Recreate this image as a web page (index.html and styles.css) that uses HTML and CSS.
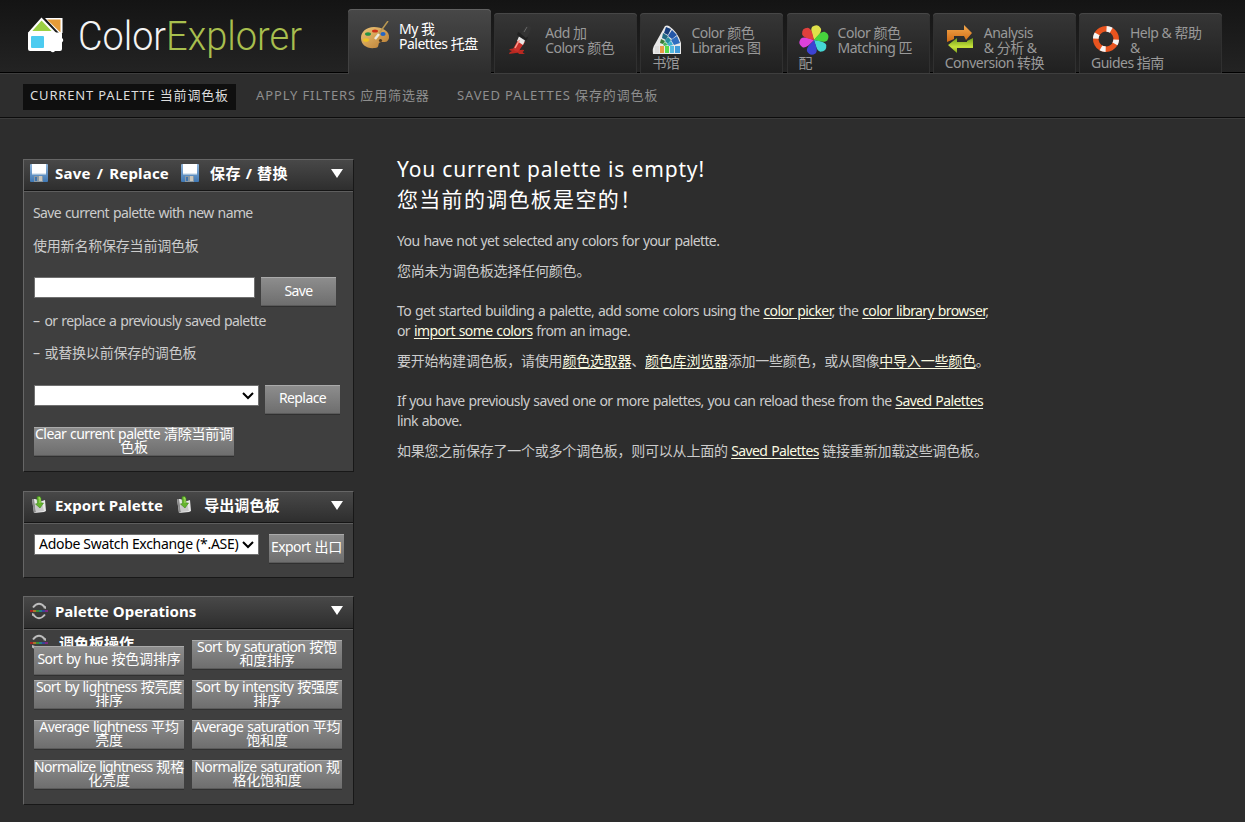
FILE: index.html
```html
<!DOCTYPE html>
<html lang="zh-CN">
<head>
<meta charset="utf-8">
<title>ColorExplorer</title>
<link rel="stylesheet" href="styles.css">
</head>
<body>
<svg width="0" height="0" class="defs">
  <defs>
    <linearGradient id="disk" x1="0" y1="0" x2="0" y2="1"><stop offset="0" stop-color="#8fb4d9"/><stop offset="1" stop-color="#3f78b4"/></linearGradient>
    <linearGradient id="wood" x1="0" y1="0" x2="1" y2="1"><stop offset="0" stop-color="#eec678"/><stop offset="1" stop-color="#b87a30"/></linearGradient>
    <linearGradient id="orange" x1="0" y1="0" x2="0" y2="1"><stop offset="0" stop-color="#f5a94d"/><stop offset="1" stop-color="#d06a14"/></linearGradient>
    <linearGradient id="lime" x1="0" y1="0" x2="0" y2="1"><stop offset="0" stop-color="#6f9c1c"/><stop offset=".6" stop-color="#c8e43c"/><stop offset="1" stop-color="#7ea21c"/></linearGradient>
    <symbol id="i-disk" viewBox="0 0 18 18"><rect width="18" height="18" rx="1" fill="url(#disk)"/><path d="M2 0h14v10H2z" fill="#fff"/><path d="M2 9h14v1.500H2z" fill="#dce6ef"/><path d="M4 12h9v6H4z" fill="#8a98a3"/><path d="M5 13h2v4H5z" fill="#3f74ad"/><path d="M9 12h3v5H9z" fill="#c9c5bb"/></symbol>
    <symbol id="i-export" viewBox="0 0 16 18"><path d="M1 3l3 0 7 2 3-1 1 11-2 1-10 1z" fill="#e8e8e8"/><path d="M1 3l2 14 2-1L3 3z" fill="#8c8c8c"/><path d="M4 8l7-1 2 8-8 1z" fill="#c9c9c9"/><path d="M6 1q3-2 4 1v5h2.500l-3.500 5-4.500-4 2-.500z" fill="#65b52e" stroke="#3d861a" stroke-width=".6"/><path d="M7.500 2q1.500-1 1.500 1v4" fill="none" stroke="#b4e56f"/></symbol>
    <symbol id="i-ops" viewBox="0 0 18 18"><path d="M3 5.500Q9-2 15 5.500M3 12.500q6 7.500 12 0" fill="none" stroke="#bdbdbd" stroke-width="2"/><path d="M13 6l3-2v3zM5 12l-3 2v-3z" fill="#bdbdbd"/><g stroke-width="2"><path d="M0 9h3" stroke="#a32626"/><path d="M3 9h3" stroke="#a87428"/><path d="M6 9h3" stroke="#3b8f35"/><path d="M9 9h3" stroke="#238083"/><path d="M12 9h3" stroke="#39429a"/><path d="M15 9h3" stroke="#7c2a80"/></g></symbol>
    <path id="petal" d="M15 15C12 10 9 6 10.500 2.500q4.500-5 9 0C21 6 18 10 15 15z"/>
  </defs>
</svg>

<header class="top">
  <svg class="logo" width="285" height="50" viewBox="0 0 285 50">
    <path d="M18 3h17.500v15H32z" fill="#fff"/>
    <path d="M20 4.500h13.500v13z" fill="#e69b38"/>
    <path d="M3 17L14.500 4 27 17z" fill="#9cd043" stroke="#fff" stroke-width="2"/>
    <path d="M1 18.500q0-1 1-1h32q1 0 1 1v4.500q2.500 2 0 4.500V34q0 2-2 2h-5q-2 2.500-4.500 0H3q-2 0-2-2z" fill="#fff"/>
    <rect x="4" y="21" width="13" height="12" rx="1" fill="#4ccbf0"/>
    <text class="word" y="35"><tspan x="51" fill="#f4f4f4" textLength="88" lengthAdjust="spacingAndGlyphs">Color</tspan><tspan fill="#a8bf4e" textLength="136" lengthAdjust="spacingAndGlyphs">Explorer</tspan></text>
  </svg>
  <nav class="tabs">
    <a class="tab active">
      <svg class="ticon" viewBox="0 0 30 30"><path d="M14 6C6 6 1 11 1 17c0 7 6 11 14 10 4 0 3-3 4-5 3-3 8 2 10-5C30 10 22 6 14 6z" fill="url(#wood)"/><ellipse cx="8" cy="13" rx="3" ry="1.800" fill="#249245"/><ellipse cx="15" cy="10" rx="3" ry="1.600" fill="#cc3218"/><ellipse cx="23" cy="13" rx="2.600" ry="1.900" fill="#2465c4"/><ellipse cx="6" cy="19" rx="3" ry="1.800" fill="#efc422"/><circle cx="20.500" cy="19.500" r="1.600" fill="#4b3922"/><path d="M28 0L18 14" stroke="#b99852" stroke-width="1.500"/><path d="M19 13l-4 5" stroke="#ecebdf" stroke-width="2.500"/></svg>
      <span>My 我</span><br><span>Palettes 托盘</span></a>
    <a class="tab">
      <svg class="ticon" viewBox="0 0 30 30"><path d="M4 24q3-1 5 0 4-2 5 1 5-1 4 1-3 1 1 3l-6 0q-1-2-3-1l-7 1q0-2 3-3-4-1-2-2z" fill="#b92921"/><path d="M13 13l6 4-7 10q-3 0-5-3z" fill="#c9302a"/><path d="M13 11.500l6 4-2 4.500-6-4z" fill="#e8e8e8"/><path d="M13.500 15L9 23" stroke="#ff9a8b" stroke-width="1.500"/><path d="M12 7l10 5.500-1.500 3L11 10z" fill="#202020"/><path d="M15 9l4-7q3-3 6 0 0 5-5 11z" fill="#343434"/><path d="M18 7l3-5" stroke="#666"/></svg>
      <span>Add 加</span><br><span>Colors 颜色</span></a>
    <a class="tab">
      <svg class="ticon" viewBox="0 0 30 30"><path d="M1 29Q0 23 3 19L13 1q2-1 4 0 9 6 12 17v11z" fill="#e9e9e9"/><path d="M14 2l5 2-3 6-4-2z" fill="#173e7c"/><path d="M20 5l5 5-5 4-4-3z" fill="#2457a7"/><path d="M25 11l3 7-6 2-3-5z" fill="#2f6ec0"/><path d="M11 8l5 3-2 4-4-2z" fill="#216a84"/><path d="M16 12l3 3-3 4-3-3z" fill="#248f9d"/><path d="M19 16l2 4-4 1-2-2z" fill="#39afd0"/><path d="M9 14l4 2-2 3-3-1z" fill="#367c37"/><path d="M13 17l3 3-4 1-1-2z" fill="#4bb65c"/><path d="M23 21h5v7h-5z" fill="#419bda"/><path d="M18 21h4v7h-4z" fill="#55bae0"/><path d="M13 21h4v7h-4z" fill="#58dc4a"/><path d="M8 21h4v7H8z" fill="#e99b45"/><path d="M3 21h4v7H3z" fill="#ddd"/></svg>
      <span>Color 颜色</span><br><span>Libraries 图</span><br><span>书馆</span></a>
    <a class="tab">
      <svg class="ticon" viewBox="0 0 30 30"><use href="#petal" fill="#dfe04a" transform="rotate(12 15 15)"/><use href="#petal" fill="#47d43d" transform="rotate(72 15 15)"/><use href="#petal" fill="#45d7d5" transform="rotate(132 15 15)"/><use href="#petal" fill="#3c43d3" transform="rotate(192 15 15)"/><use href="#petal" fill="#dc41dc" transform="rotate(256 15 15)"/><use href="#petal" fill="#df403d" transform="rotate(316 15 15)"/></svg>
      <span>Color 颜色</span><br><span>Matching 匹</span><br><span>配</span></a>
    <a class="tab">
      <svg class="ticon" viewBox="0 0 30 30"><path d="M2 17V5h17V0l8 8-6 7-2-4H9v3z" fill="url(#orange)"/><path d="M28 13v10H12v5L3 20l9-7v4h10v-1z" fill="url(#lime)"/></svg>
      <span>Analysis</span><br><span>&amp; 分析 &amp;</span><br><span>Conversion 转换</span></a>
    <a class="tab">
      <svg class="ticon" viewBox="0 0 30 30"><g transform="rotate(15 15 14)"><circle cx="15" cy="14" r="10.200" fill="none" stroke="#e9541f" stroke-width="5.500"/><circle cx="15" cy="14" r="10.200" fill="none" stroke="#f5f5f5" stroke-width="5.700" stroke-dasharray="5 11.022" stroke-dashoffset="2.500"/></g></svg>
      <span>Help &amp; 帮助</span><br><span>&amp;</span><br><span>Guides 指南</span></a>
  </nav>
</header>
<nav class="subnav">
  <a class="current"><span>CURRENT PALETTE 当前调色板</span></a>
  <a class="filters"><span>APPLY FILTERS 应用筛选器</span></a>
  <a class="saved"><span>SAVED PALETTES 保存的调色板</span></a>
</nav>

<main class="page">
  <aside class="side">
    <section class="panel save">
      <h2 class="head"><svg class="hicon" viewBox="0 0 18 18"><use href="#i-disk"/></svg><span class="wide">Save / Replace</span><svg class="hicon second" viewBox="0 0 18 18"><use href="#i-disk"/></svg><span class="wider">保存 / 替换</span><i class="arrow"></i></h2>
      <div class="body">
        <p class="line l1"><span class="latin">Save current palette with new name</span></p>
        <p class="line l2"><span>使用新名称保存当前调色板</span></p>
        <div class="row"><input class="field" type="text"><button class="btn small one">Save</button></div>
        <p class="line l3"><span class="dash">–</span> <span class="latin">or replace a previously saved palette</span></p>
        <p class="line l4"><span class="dash">–</span> <span>或替换以前保存的调色板</span></p>
        <div class="row"><div class="select"><svg class="chev" viewBox="0 0 12 8"><path d="M1 1l5 5 5-5"/></svg></div><button class="btn small">Replace</button></div>
        <button class="btn clear">Clear current palette <b>清除当前调</b><br><b>色板</b></button>
      </div>
    </section>
    <section class="panel export">
      <h2 class="head"><svg class="hicon" viewBox="0 0 16 18"><use href="#i-export"/></svg><span class="mid">Export Palette</span><svg class="hicon second" viewBox="0 0 16 18"><use href="#i-export"/></svg><span class="mid">导出调色板</span><i class="arrow"></i></h2>
      <div class="body">
        <div class="row"><div class="select"><span class="opt">Adobe Swatch Exchange (*.ASE)</span><svg class="chev" viewBox="0 0 12 8"><path d="M1 1l5 5 5-5"/></svg></div><button class="btn small">Export <b>出口</b></button></div>
      </div>
    </section>
    <section class="panel ops">
      <h2 class="head"><svg class="hicon" viewBox="0 0 18 18"><use href="#i-ops"/></svg><span class="near">Palette Operations</span><i class="arrow"></i></h2>
      <div class="spill"><svg class="hicon" viewBox="0 0 18 18"><use href="#i-ops"/></svg><span class="near">调色板操作</span></div>
      <div class="body grid">
        <button class="btn hue">Sort by hue <b>按色调排序</b></button><button class="btn two">Sort by saturation <b>按饱</b><br><b>和度排序</b></button>
        <button class="btn two">Sort by lightness <b>按亮度</b><br><b>排序</b></button><button class="btn two">Sort by intensity <b>按强度</b><br><b>排序</b></button>
        <button class="btn two">Average lightness <b>平均</b><br><b>亮度</b></button><button class="btn two">Average saturation <b>平均</b><br><b>饱和度</b></button>
        <button class="btn two snug">Normalize lightness <b>规格</b><br><b>化亮度</b></button><button class="btn two">Normalize saturation <b>规</b><br><b>格化饱和度</b></button>
      </div>
    </section>
  </aside>
  <article class="content">
    <h1 class="title"><span class="en">You current palette is empty!</span><br><span class="zh">您当前的调色板是空的！</span></h1>
    <p class="latin">You have not yet selected any colors for your palette.</p>
    <p>您尚未为调色板选择任何颜色。</p>
    <p class="gap latin">To get started building a palette, add some colors using the <a>color picker</a>, the <a>color library browser</a>,<br><span>or <a>import some colors</a> from an image.</span></p>
    <p><span class="c5">要开始构建调色板，请使用<a>颜色选取器</a>、<a>颜色库浏览器</a>添加一些颜色，或从图像<a>中导入一些颜色</a>。</span></p>
    <p class="gap latin">If you have previously saved one or more palettes, you can reload these from the <a>Saved Palettes</a><br>link above.</p>
    <p><span class="c8">如果您之前保存了一个或多个调色板，则可以从上面的 <a class="latin">Saved Palettes</a> 链接重新加载这些调色板。</span></p>
  </article>
</main>
</body>
</html>
```
FILE: styles.css
```css
* { box-sizing: border-box; }
body { margin: 0; height: 822px; overflow: hidden; background: #2d2d2d; color: #ccc; font: 14px/20px "Noto Sans", "Noto Sans CJK SC", sans-serif; letter-spacing: -0.2px; }
.defs { position: absolute; }
p, h1, h2 { margin: 0; font-weight: normal; }
span { white-space: nowrap; }
button { font: inherit; }
.latin { letter-spacing: -0.6px; word-spacing: 0.8px; }
.dash { letter-spacing: 1px; }

.top { height: 74px; display: flex; align-items: flex-start; background: linear-gradient(#141414, #232323 72px); border-bottom: 1px solid #3e3e3e; box-shadow: inset 0 -1px #000; }
.logo { margin: 15px 0 0 27px; width: 285px; height: 50px; flex: none; overflow: visible; }
.word { font: 300 40px Roboto, sans-serif; letter-spacing: 0; }
.tabs { display: flex; gap: 3.200px; margin-left: 36px; }
.tab { width: 143px; height: 60px; margin-top: 13px; padding: 12px 0 0 12px; border-radius: 4px 4px 0 0; background: linear-gradient(#363636, #202020); box-shadow: inset 0 1px #474747, inset 1px 0 #303030, inset -1px 0 #303030; color: #999; line-height: 15px; letter-spacing: -0.5px; }
.tab.active { height: 65px; margin-top: 9px; background: linear-gradient(#484848, #2d2d2d); box-shadow: inset 0 1px #616161, inset 1px 0 #414141; color: #fff; }
.ticon { float: left; width: 30px; height: 30px; margin-right: 9px; }

.subnav { height: 45px; display: flex; align-items: flex-start; padding: 10px 0 0 23px; border-bottom: 1px solid #3c3c3c; box-shadow: inset 0 -1px #0c0c0c; font-size: 13px; line-height: 22px; color: #8e8e8e; letter-spacing: 0.88px; }
.current { width: 213px; height: 26px; padding-left: 7px; background: #0f0f0f; color: #ddd; letter-spacing: 0.83px; }
.filters { margin-left: 20px; width: 174px; }
.saved { margin-left: 27px; }

.page { display: flex; align-items: flex-start; }
.side { width: 331px; margin: 40px 0 0 23px; }
.panel { position: relative; background: #3f3f3f; border: 1px solid; border-color: #666 #181818 #181818 #666; }
.save { height: 313px; }
.export { height: 87px; margin-top: 19px; }
.ops { height: 209px; margin-top: 18px; }
.head { display: flex; align-items: center; height: 31px; padding: 0 10px 4px 6px; background: linear-gradient(#484848, #2e2e2e); border-bottom: 1px solid #151515; font-size: 15px; font-weight: bold; color: #fff; }
.ops .head { height: 32px; }
.wide { letter-spacing: 0.2px; word-spacing: 2px; }
.wider { letter-spacing: 0.57px; }
.mid { letter-spacing: 0.1px; }
.near { letter-spacing: 0.02px; }
.hicon { width: 18px; height: 18px; flex: none; margin-right: 7px; }
.hicon.second { margin-left: 12px; margin-right: 11px; }
.arrow { margin-left: auto; border: 6px solid transparent; border-top: 9px solid #fff; border-bottom: 0; }
.body { border-top: 1px solid #5e5e5e; padding: 11px 0 0 10px; }
.export .body { padding-top: 10px; }
.line { height: 20px; margin-left: -1px; }
.l2 { margin: 13px 0 21px -1px; }
.l3 { margin-top: 5px; }
.l4 { margin: 12px 0 22px -1px; }
.row { display: flex; gap: 6px; align-items: flex-start; }
.field { width: 221px; height: 21px; border: 1px solid #707070; padding: 0; background: #fff; }
.select { width: 225px; height: 21px; border: 1px solid #707070; background: #fff; color: #000; display: flex; align-items: center; padding: 0 4px 1px; }
.opt { letter-spacing: -0.3px; }
.chev { width: 12px; height: 8px; margin: 1px 0 0 auto; fill: none; stroke: #000; stroke-width: 2; }
.export .row { gap: 10px; }
.btn { display: block; border: 0; padding: 0 0 4px; height: 29px; color: #fff; line-height: 13px; letter-spacing: -0.58px; word-spacing: 0.8px; white-space: nowrap; text-align: center; background: linear-gradient(#8e8e8e, #6d6d6d); box-shadow: inset 0 1px #aaa, inset 0 -1px #5a5a5a, 0 1px #303030; }
.btn b { font-weight: normal; letter-spacing: -0.2px; }
.btn.one { padding-bottom: 2px; }
.btn.two, .btn.clear { padding-bottom: 5px; }
.btn.snug { letter-spacing: -0.68px; }
.small { width: 75px; }
.clear { width: 200px; margin-top: 13px; }
.spill { position: absolute; left: 6px; top: 37px; display: flex; font-size: 15px; line-height: 18px; font-weight: bold; color: #fff; }
.spill .hicon { margin-right: 11px; }
.grid { position: relative; display: grid; grid-template-columns: 150px 150px; column-gap: 8px; row-gap: 11px; padding-top: 10px; }
.hue { margin: 6px 0 -6px; }

.content { margin: 35px 0 0 43px; width: 600px; }
.title { font-size: 21px; line-height: 30px; color: #fff; margin-bottom: 17px; }
.en { letter-spacing: 0.84px; }
.zh { letter-spacing: 1.3px; }
.c5, .c8 { letter-spacing: -0.22px; }
.content p { margin-bottom: 10px; }
.content p.gap { margin-top: 20px; }
.content a { color: #fafae0; text-decoration: underline; text-underline-offset: 2px; }
```
